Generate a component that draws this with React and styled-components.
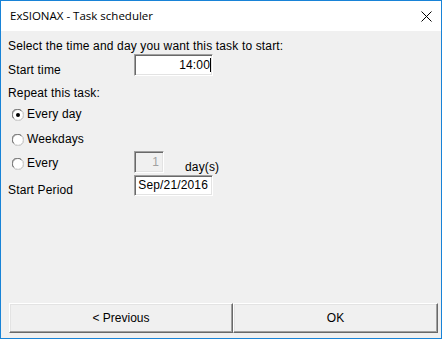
import React from "react";
import styled, { createGlobalStyle } from "styled-components";

const Global = createGlobalStyle`
  html, body { margin: 0; padding: 0; background: #ffffff; }
  body { font-family: "Liberation Sans", Arial, sans-serif; }
`;

const Window = styled.div`
  width: 442px;
  height: 339px;
  box-sizing: border-box;
  border: 1px solid #1883d7;
  display: flex;
  flex-direction: column;
  background: #f0f0f0;
`;

const TitleBar = styled.div`
  height: 30px;
  background: #ffffff;
  display: flex;
  align-items: center;
  justify-content: space-between;
  padding: 0 9px 0 9px;
  flex-shrink: 0;
`;

const Title = styled.div`
  font-family: "Open Sans", "Noto Sans", sans-serif;
  font-size: 11.5px;
  color: #000;
  line-height: 16px;
`;

const CloseBtn = styled.div`
  width: 11px;
  height: 11px;
  display: flex;
  align-items: center;
  justify-content: center;
`;

const Body = styled.div`
  flex: 1;
  display: flex;
  flex-direction: column;
  justify-content: space-between;
`;

const Form = styled.div`
  display: flex;
  flex-direction: column;
  padding: 9px 7px 0 7px;
  font-size: 12px;
  letter-spacing: 0.15px;
  color: #000;
`;

const Row = styled.div`
  display: flex;
  align-items: flex-start;
  height: ${(p) => p.$h}px;
  margin-top: ${(p) => p.$mt || 0}px;
`;

const Text = styled.div`
  line-height: 13px;
  white-space: nowrap;
  padding-top: ${(p) => p.$pt || 0}px;
  margin-left: ${(p) => p.$ml || 0}px;
`;

const LabelCell = styled.div`
  width: 126px;
  flex-shrink: 0;
  line-height: 13px;
  padding-top: ${(p) => p.$pt || 0}px;
  white-space: nowrap;
`;

const RadioLabel = styled.label`
  width: 126px;
  flex-shrink: 0;
  display: flex;
  align-items: center;
  gap: 3px;
  padding-left: 4px;
  padding-top: ${(p) => p.$pt || 0}px;
  line-height: 13px;
  box-sizing: border-box;
  white-space: nowrap;
`;

const Input = styled.div`
  box-sizing: border-box;
  width: ${(p) => p.$w}px;
  height: ${(p) => p.$h}px;
  background: ${(p) => (p.$disabled ? "#f0f0f0" : "#ffffff")};
  border-top: 1px solid #a0a0a0;
  border-left: 1px solid #a0a0a0;
  border-right: 1px solid #ffffff;
  border-bottom: 1px solid #ffffff;
  box-shadow: inset 1px 1px 0 #696969, inset -1px -1px 0 #e3e3e3;
  display: flex;
  align-items: center;
  justify-content: flex-end;
  padding: 0 4px 0 4px;
  font-size: 12px;
  line-height: 13px;
  color: ${(p) => (p.$disabled ? "#a0a0a0" : "#000")};
`;

const Caret = styled.span`
  display: inline-block;
  width: 1px;
  height: 14px;
  background: #000;
  margin-right: -3px;
`;

const ButtonBar = styled.div`
  display: flex;
  padding: 0 3px 5px 8px;
`;

const Button = styled.button`
  box-sizing: border-box;
  width: ${(p) => p.$w}px;
  height: 30px;
  background: #f0f0f0;
  border: none;
  border-top: 1px solid #ffffff;
  border-left: 1px solid #ffffff;
  border-right: 1px solid #696969;
  border-bottom: 1px solid #696969;
  box-shadow: inset -1px -1px 0 #a0a0a0, inset 1px 1px 0 #e3e3e3;
  font-family: "Liberation Sans", Arial, sans-serif;
  font-size: 12px;
  color: #000;
  padding: 0;
  margin: 0;
`;

function Radio({ checked }) {
  return (
    <svg width="12" height="12" viewBox="0 0 12 12">
      <circle cx="6" cy="6" r="5.5" fill="#ffffff" stroke="#a0a0a0" />
      <path d="M1.6 9.2 A5 5 0 0 1 9.2 1.6" fill="none" stroke="#696969" strokeWidth="1" />
      <path d="M2.4 9.8 A5 5 0 0 0 9.8 2.4" fill="none" stroke="#e3e3e3" strokeWidth="1" />
      {checked && <circle cx="6" cy="6" r="2" fill="#000" />}
    </svg>
  );
}

export default function App() {
  return (
    <>
      <Global />
      <Window>
        <TitleBar>
          <Title>ExSIONAX - Task scheduler</Title>
          <CloseBtn>
            <svg width="11" height="11" viewBox="0 0 11 11">
              <path d="M0.5 0.5 L10.5 10.5 M10.5 0.5 L0.5 10.5" stroke="#000" strokeWidth="1" />
            </svg>
          </CloseBtn>
        </TitleBar>
        <Body>
          <Form>
            <Row $h={13}>
              <Text>Select the time and day you want this task to start:</Text>
            </Row>
            <Row $h={23} $mt={1}>
              <LabelCell $pt={10}>Start time</LabelCell>
              <Input $w={79} $h={22}>
                14:00
                <Caret />
              </Input>
            </Row>
            <Row $h={13} $mt={10}>
              <Text>Repeat this task:</Text>
            </Row>
            <Row $h={13} $mt={8}>
              <RadioLabel>
                <Radio checked />
                Every day
              </RadioLabel>
            </Row>
            <Row $h={13} $mt={12}>
              <RadioLabel>
                <Radio />
                Weekdays
              </RadioLabel>
            </Row>
            <Row $h={23} $mt={5}>
              <RadioLabel $pt={6}>
                <Radio />
                Every
              </RadioLabel>
              <Input $w={30} $h={22} $disabled>
                1
              </Input>
              <Text $pt={10} $ml={21}>day(s)</Text>
            </Row>
            <Row $h={22} $mt={1}>
              <LabelCell $pt={9}>Start Period</LabelCell>
              <Input $w={79} $h={21}>
                Sep/21/2016
              </Input>
            </Row>
          </Form>
          <ButtonBar>
            <Button $w={224}>&lt; Previous</Button>
            <Button $w={205}>OK</Button>
          </ButtonBar>
        </Body>
      </Window>
    </>
  );
}
